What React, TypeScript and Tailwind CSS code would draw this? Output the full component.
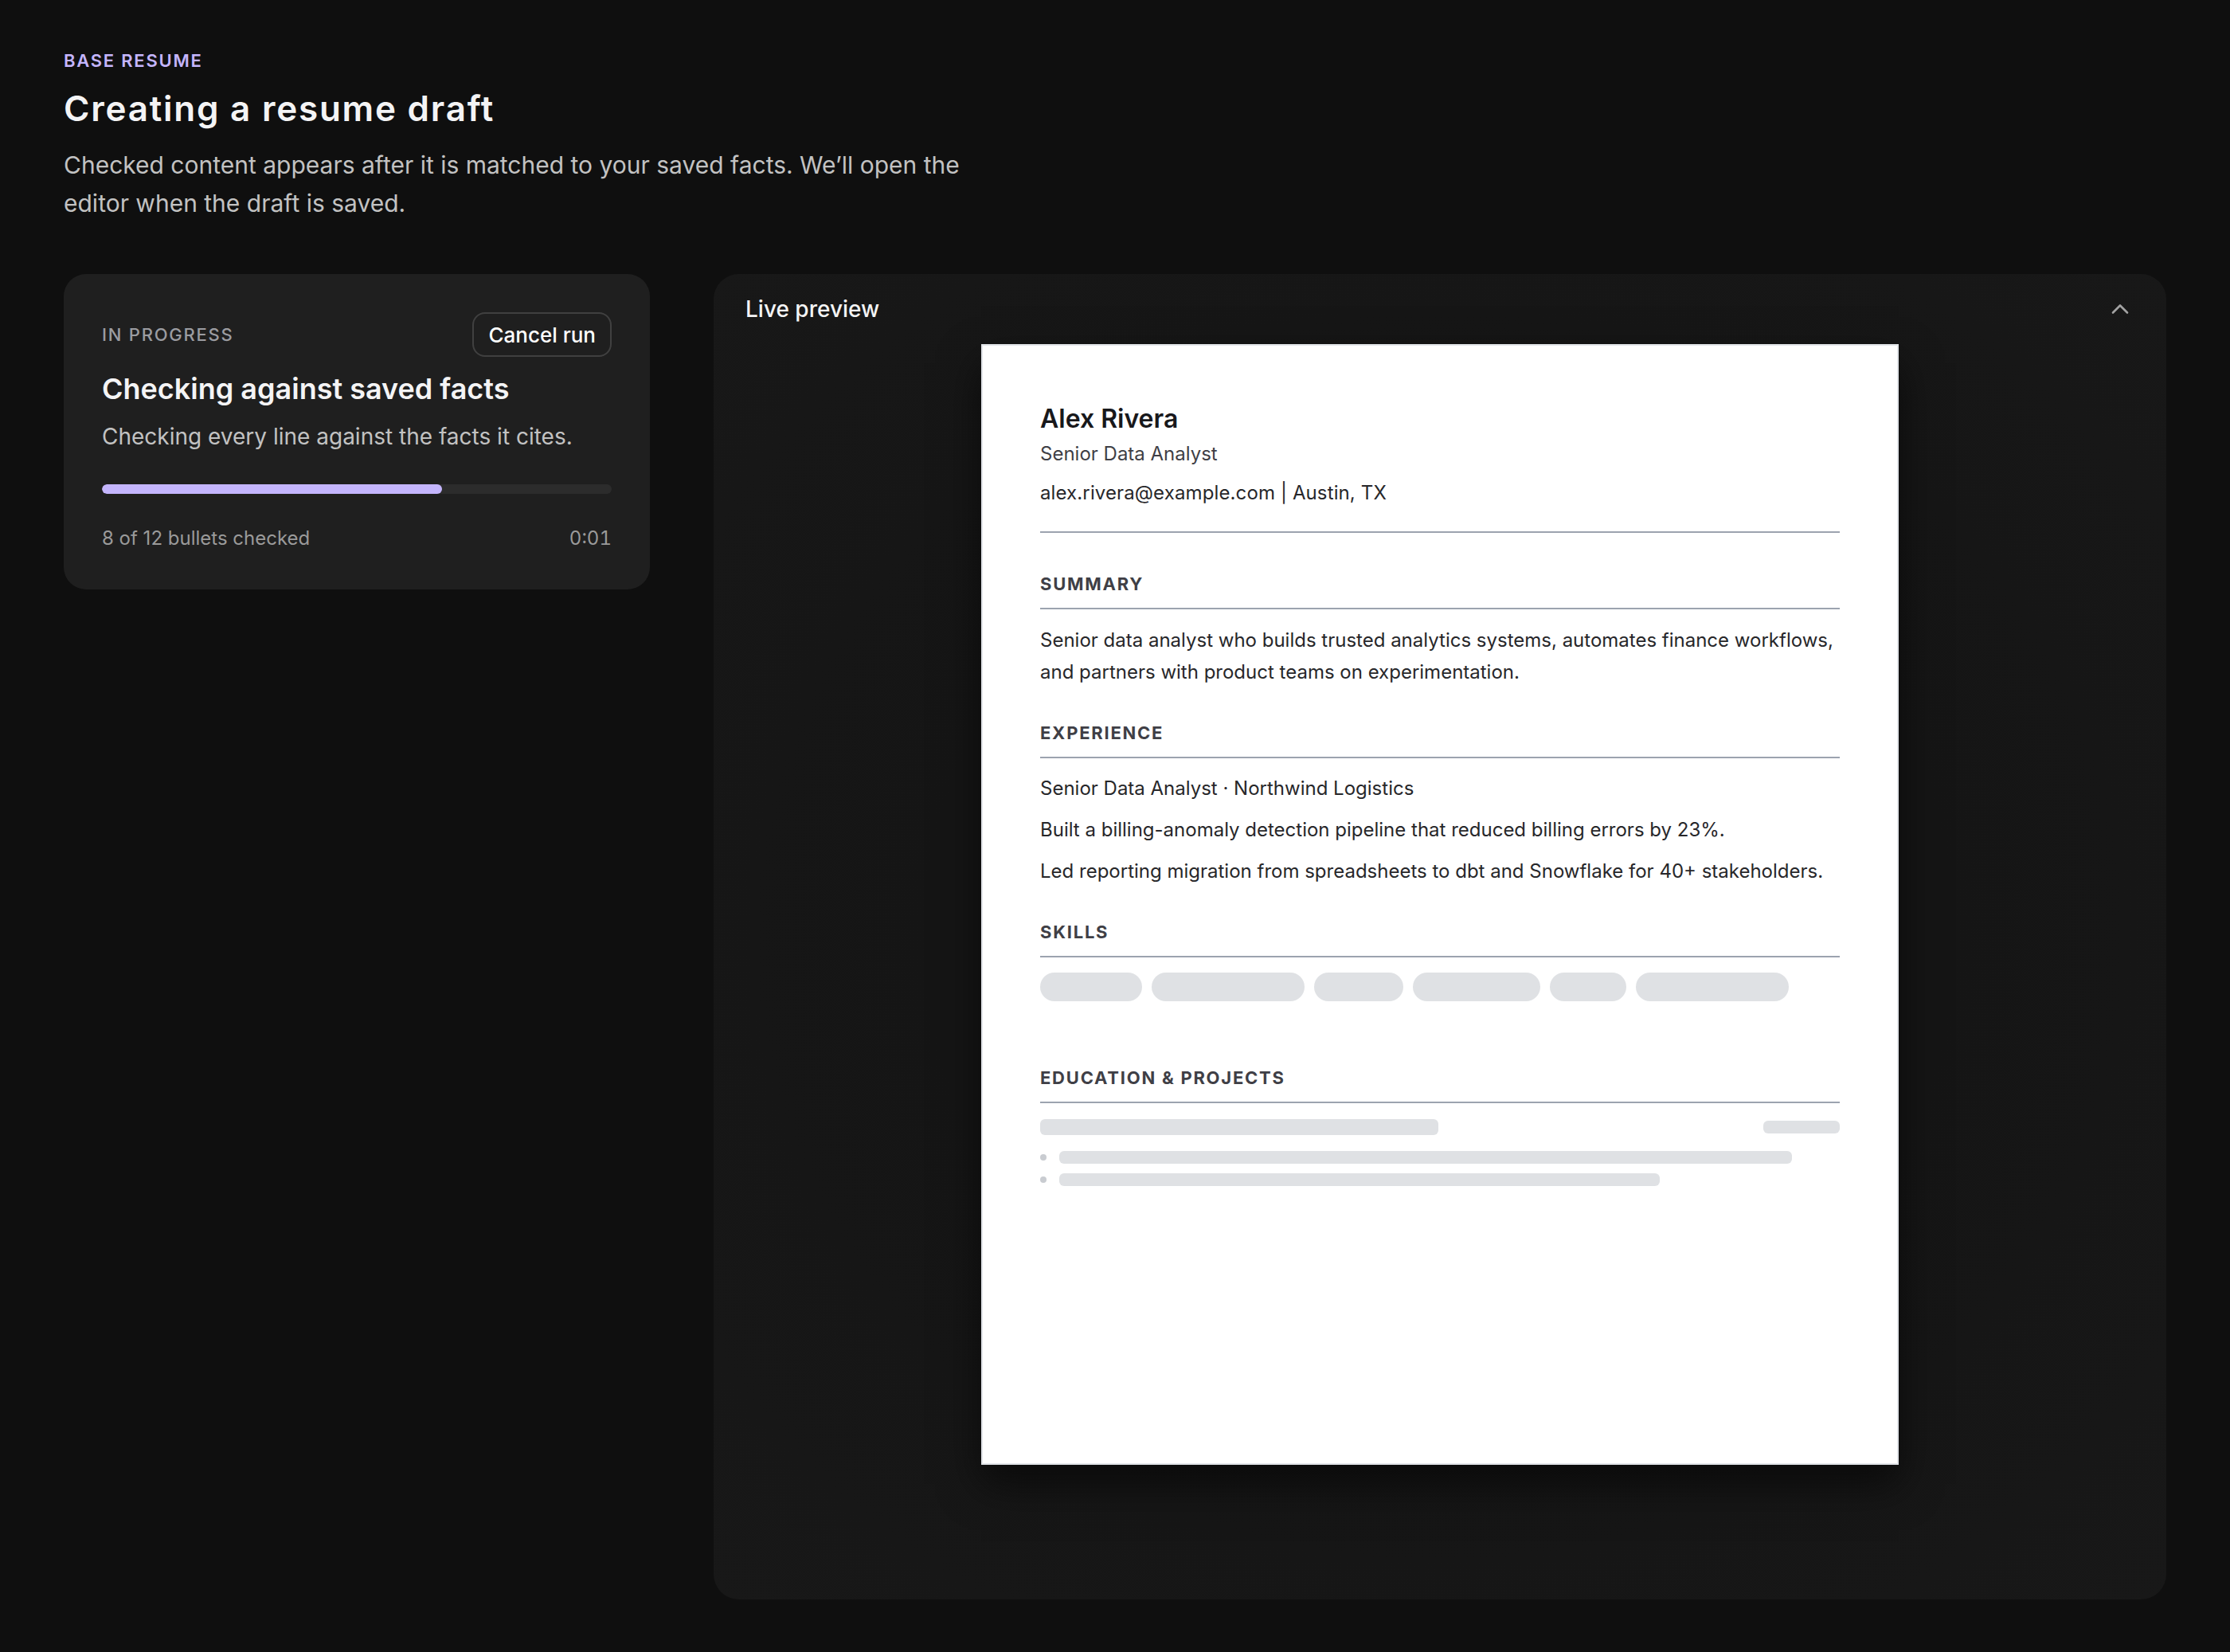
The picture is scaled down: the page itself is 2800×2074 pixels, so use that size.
import React from "react";
import { ChevronUp } from "lucide-react";

const skills = [128, 192, 112, 160, 96, 192];

function SectionHeading({ children }: { children: React.ReactNode }) {
  return (
    <h3 className="border-b-2 border-[#9ca3af] pb-[14px] text-[22px] leading-[32px] font-bold uppercase tracking-[0.08em] text-[#3f3f46]">
      {children}
    </h3>
  );
}

export default function App() {
  return (
    <div className="min-h-screen bg-[#0f0f0f] font-['Inter',sans-serif] text-white flex flex-col px-[80px] pt-[64px] pb-[66px]">
      {/* Header */}
      <div>
        <p className="text-[22px] leading-[24px] font-semibold uppercase tracking-[0.08em] text-[#c4b5fd]">Base resume</p>
        <h1 className="mt-[20px] text-[44px] leading-[56px] font-semibold tracking-[0.04em] text-[#f4f4f5]">
          Creating a resume draft
        </h1>
        <p className="mt-[19px] max-w-[1152px] text-[30px] leading-[48px] text-[#c2c2c2]">
          Checked content appears after it is matched to your saved facts. We’ll open the editor when the draft is saved.
        </p>
      </div>

      <div className="mt-[65px] flex-1 grid grid-cols-[736px_1fr] gap-[80px] items-start">
        {/* Progress card */}
        <div className="rounded-[28px] bg-[#1f1f1f] p-[48px]">
          <div className="flex items-center justify-between">
            <span className="text-[22px] font-medium uppercase tracking-[0.08em] text-[#9b9ca1]">In progress</span>
            <button className="h-[56px] px-[18px] rounded-[16px] border-2 border-white/15 text-[26px] font-medium text-white">
              Cancel run
            </button>
          </div>
          <h2 className="mt-[16px] text-[36px] leading-[48px] font-semibold text-[#f4f4f5]">Checking against saved facts</h2>
          <p className="mt-[16px] text-[28px] leading-[40px] text-[#c2c2c2]">Checking every line against the facts it cites.</p>
          <div className="mt-[40px] h-[12px] rounded-full bg-[#2c2c2c] overflow-hidden">
            <div className="h-full rounded-full bg-[#c4b5fd]" style={{ width: `${(8 / 12) * 100}%` }} />
          </div>
          <div className="mt-[40px] flex justify-between text-[24px] leading-[32px] text-[#9a9a9a]">
            <span>8 of 12 bullets checked</span>
            <span className="tabular-nums">0:01</span>
          </div>
        </div>

        {/* Live preview */}
        <div className="self-stretch rounded-[32px] bg-[radial-gradient(ellipse_at_center,#151515_50%,#181818_100%)] px-[40px] pt-[24px]">
          <div className="flex h-[40px] items-center justify-between">
            <span className="text-[28px] leading-[40px] font-medium text-[#f4f4f5]">Live preview</span>
            <ChevronUp size={36} strokeWidth={1.75} className="text-[#a3a3a3]" />
          </div>

          <div className="mx-auto mt-[24px] h-[1407px] w-[1152px] border-2 border-[#e2e5e9] bg-white p-[72px] shadow-[0_24px_48px_rgba(0,0,0,0.55)]">
            <div className="border-b-2 border-[#9ca3af] pb-[30px]">
              <h2 className="text-[32px] leading-[40px] font-semibold text-[#18181b]">Alex Rivera</h2>
              <p className="mt-[6px] text-[24px] leading-[36px] text-[#3f3f46]">Senior Data Analyst</p>
              <p className="mt-[13px] text-[24px] leading-[36px] tracking-[0.005em] text-[#27272a]">alex.rivera@example.com | Austin, TX</p>
            </div>

            <section className="mt-[48px]">
              <SectionHeading>Summary</SectionHeading>
              <p className="mt-[19px] text-[24px] leading-[40px] text-[#27272a]">
                Senior data analyst who builds trusted analytics systems, automates finance workflows, and partners with product teams on experimentation.
              </p>
            </section>

            <section className="mt-[40px]">
              <SectionHeading>Experience</SectionHeading>
              <div className="mt-[18px] flex flex-col gap-[12px] text-[24px] leading-[40px] text-[#27272a]">
                <p>Senior Data Analyst · Northwind Logistics</p>
                <p>Built a billing-anomaly detection pipeline that reduced billing errors by 23%.</p>
                <p>Led reporting migration from spreadsheets to dbt and Snowflake for 40+ stakeholders.</p>
              </div>
            </section>

            <section className="mt-[40px]">
              <SectionHeading>Skills</SectionHeading>
              <div className="mt-[19px] flex flex-wrap gap-[12px] pb-[40px]">
                {skills.map((w, i) => (
                  <div key={i} className="h-[36px] rounded-full bg-[#dfe1e4]" style={{ width: w }} />
                ))}
              </div>
            </section>

            <section className="mt-[40px]">
              <SectionHeading>Education &amp; Projects</SectionHeading>
              <div className="mt-[20px] flex items-center justify-between">
                <div className="h-[20px] w-[500px] rounded-[6px] bg-[#dfe1e4]" />
                <div className="h-[16px] w-[96px] rounded-[6px] bg-[#dfe1e4]" />
              </div>
              <div className="mt-[20px] flex flex-col gap-[12px]">
                <div className="flex items-center gap-[16px]">
                  <span className="h-[8px] w-[8px] rounded-full bg-[#c9ccd1]" />
                  <div className="h-[16px] w-[920px] rounded-[6px] bg-[#dfe1e4]" />
                </div>
                <div className="flex items-center gap-[16px]">
                  <span className="h-[8px] w-[8px] rounded-full bg-[#c9ccd1]" />
                  <div className="h-[16px] w-[754px] rounded-[6px] bg-[#dfe1e4]" />
                </div>
              </div>
            </section>
          </div>
        </div>
      </div>
    </div>
  );
}
